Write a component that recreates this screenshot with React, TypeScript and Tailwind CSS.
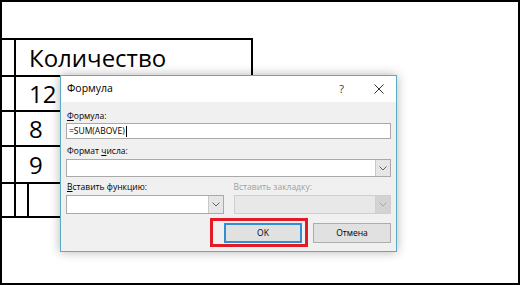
import React from "react";

const ui = { fontFamily: '"Open Sans", "Liberation Sans", sans-serif' };
const doc = { fontFamily: '"Open Sans", Lato, sans-serif' };

function Chevron({ color = "#606060" }: { color?: string }) {
  return (
    <svg width="8" height="5" viewBox="0 0 8 5">
      <polyline points="0.5,0.5 4,4 7.5,0.5" fill="none" stroke={color} strokeWidth="1" />
    </svg>
  );
}

function Select({ disabled = false, className = "" }: { disabled?: boolean; className?: string }) {
  return (
    <div
      className={`flex border ${disabled ? "border-[#cfcfcf] bg-[#e8e8e8]" : "border-[#a9a9a9] bg-white"} ${className}`}
    >
      <div className="flex-1" />
      <div
        className={`w-[15px] flex items-center justify-center border-l ${
          disabled ? "border-[#cfcfcf] bg-[#d3d3d3]" : "border-[#c8c8c8] bg-[#e6e6e6]"
        }`}
      >
        <Chevron color={disabled ? "#a8a8a8" : "#606060"} />
      </div>
    </div>
  );
}

export default function App() {
  const rows = ["Количество", "12", "8", "9"];

  return (
    <div className="relative w-[520px] h-[285px] box-border border-2 border-black bg-white overflow-hidden">
      {/* table in the document */}
      <div className="mt-[36px] w-[251px] border-t-2 border-r-2 border-black text-black" style={doc}>
        {rows.map((r, i) => (
          <div
            key={i}
            className={`flex border-b-2 border-black ${i === 0 || i === 3 ? "h-[37px]" : "h-[35px]"}`}
          >
            <div className="w-[14px] border-r-2 border-black" />
            <div className="pl-[13px] flex items-center text-[24px] leading-none">{r}</div>
          </div>
        ))}
        <div className="flex h-[34px] border-b-2 border-black">
          <div className="w-[14px] border-r-2 border-black" />
          <div className="w-[13px] border-r-2 border-black" />
        </div>
      </div>

      {/* dialog */}
      <div
        className="absolute left-[58px] top-[73px] w-[337px] h-[177px] border border-[#5aaac4] bg-[#f0f0f0] shadow-[0_0_10px_rgba(0,0,0,0.3)] flex flex-col text-[8.5px] text-black"
        style={ui}
      >
        <div className="h-[26px] bg-white flex items-center pl-[6px] pr-[12px]">
          <span className="text-[10.5px]">Формула</span>
          <span className="ml-auto text-[11px] text-[#333] mr-[30px]">?</span>
          <svg width="10" height="10" viewBox="0 0 10 10">
            <path d="M0.5 0.5 L9.5 9.5 M9.5 0.5 L0.5 9.5" stroke="#333" strokeWidth="1" />
          </svg>
        </div>

        <div className="flex-1 flex flex-col px-[5px] pt-[7px] pb-[8px]">
          <div className="h-[13px] leading-[13px] pl-[1px]">
            <span className="underline">Ф</span>ормула:
          </div>
          <div className="mt-[1px] h-[16px] border border-[#a9a9a9] bg-white flex items-center pl-[2px] leading-none">
            =SUM(ABOVE)
            <span className="ml-[1px] w-px h-[11px] bg-black" />
          </div>

          <div className="mt-[6px] h-[12px] leading-[12px] pl-[1px]">
            Формат <span className="underline">ч</span>исла:
          </div>
          <Select className="mt-[2px] h-[18px]" />

          <div className="mt-[4px] grid grid-cols-2 gap-[10px]">
            <div>
              <div className="h-[12px] leading-[12px] pl-[1px]">
                <span className="underline">В</span>ставить функцию:
              </div>
              <Select className="mt-[2px] h-[19px]" />
            </div>
            <div>
              <div className="h-[12px] leading-[12px] text-[#a0a0a0]">Вставить закладку:</div>
              <Select disabled className="mt-[2px] h-[19px]" />
            </div>
          </div>

          <div className="mt-auto flex justify-end gap-[11px]">
            <div className="relative">
              <button className="w-[78px] h-[20px] border-2 border-[#2f8fd0] bg-[#e1e1e1] text-[8.5px] leading-none">
                OK
              </button>
              <span className="absolute -left-[14px] -right-[6px] -top-[5px] -bottom-[4px] border-[3px] border-[#e21b25] pointer-events-none" />
            </div>
            <button className="w-[78px] h-[20px] border border-[#adadad] bg-[#e1e1e1] text-[8.5px] leading-none">
              Отмена
            </button>
          </div>
        </div>
      </div>
    </div>
  );
}
